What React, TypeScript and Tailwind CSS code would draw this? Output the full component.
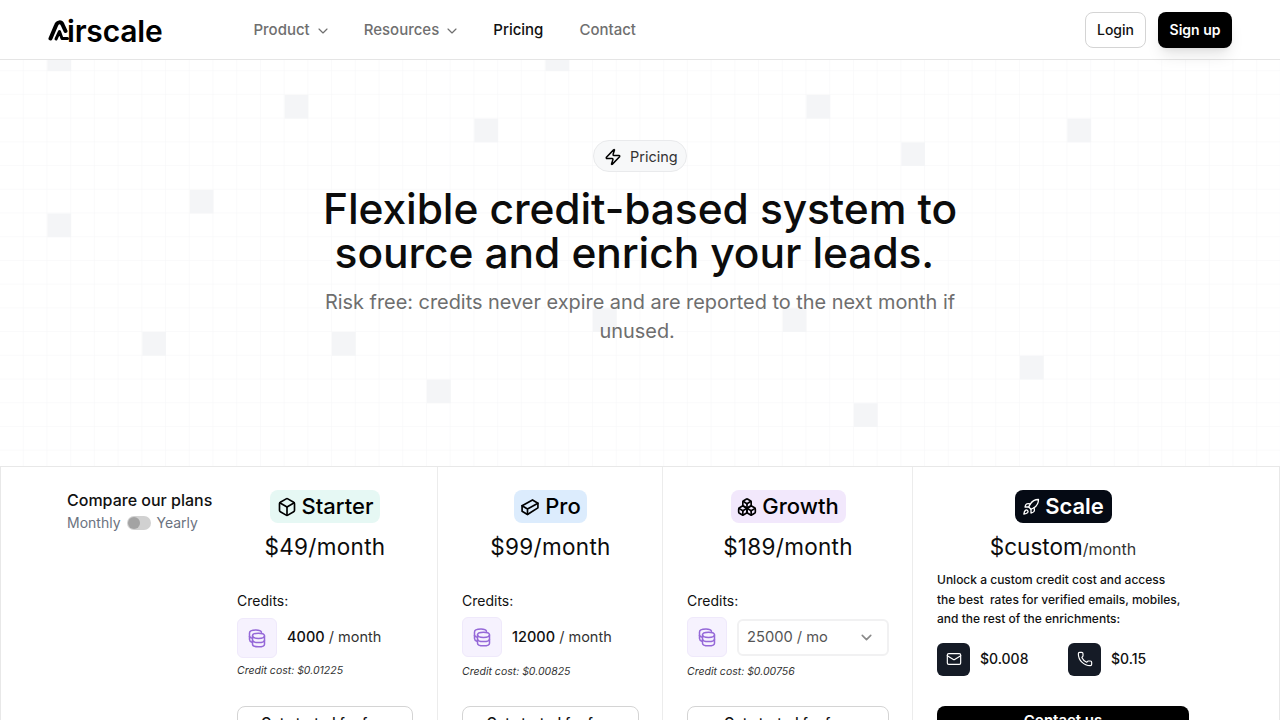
import { Box, Boxes, ChevronDown, Mail, Phone, Rocket, Zap } from "lucide-react";

const sans = "font-['Inter',sans-serif]";

const cell = 23.72;
const squares = [
  [2, 2], [23, 2], [12, 4], [34, 4], [20, 5], [45, 5], [38, 6], [8, 8],
  [2, 9], [25, 13], [33, 13], [6, 14], [14, 14], [43, 15], [18, 16], [36, 17],
];

const GridBackdrop = () => (
  <svg className="absolute left-0 top-0 h-[466px] w-full" aria-hidden="true">
    <defs>
      <pattern id="grid" width={cell} height={cell} patternUnits="userSpaceOnUse">
        <path d={`M${cell} 0V${cell}M0 ${cell}H${cell}`} fill="none" stroke="#f5f6f7" strokeWidth="1" />
      </pattern>
    </defs>
    <rect width="100%" height="100%" fill="url(#grid)" />
    {squares.map(([c, r]) => (
      <rect key={`${c}-${r}`} x={c * cell} y={r * cell} width={cell} height={cell} fill="#f4f5f7" />
    ))}
  </svg>
);

const Logo = () => (
  <div className="mt-[2px] flex items-center">
    <svg width="22" height="22" viewBox="0 0 22 22" className="-mr-[3px]" aria-hidden="true">
      <path
        d="M2.5 18.5 L8 5.5 C9.5 1.5 13 1.5 14.5 4.5 L17.5 11"
        fill="none"
        stroke="#000"
        strokeWidth="4"
        strokeLinecap="round"
      />
      <path
        d="M8 19 L11.5 11.5 L14 18.5 L19.5 18.5"
        fill="none"
        stroke="#000"
        strokeWidth="3"
        strokeLinecap="round"
        strokeLinejoin="round"
      />
    </svg>
    <span className="text-[30px] leading-none font-semibold tracking-[-0.2px] text-black">irscale</span>
  </div>
);

const Header = () => (
  <header className="relative z-10 flex h-[60px] items-center border-b border-[#e5e5e5] bg-white pl-12 pr-12">
    <Logo />
    <nav className="ml-[91px] mt-[2px] flex items-center text-[15px] font-medium text-[#6f6f6f]">
      <span className="flex items-center gap-[5px]">
        Product <ChevronDown size={16} strokeWidth={1.75} />
      </span>
      <span className="ml-[33px] flex items-center gap-[5px]">
        Resources <ChevronDown size={16} strokeWidth={1.75} />
      </span>
      <span className="ml-[33px] text-[#111]">Pricing</span>
      <span className="ml-9">Contact</span>
    </nav>
    <div className="ml-auto flex items-center gap-3 text-[14px] font-medium">
      <button className="h-9 w-[61px] rounded-lg border border-[#d4d4d4] bg-white text-[#111]">Login</button>
      <button className="h-9 w-[74px] rounded-lg bg-black font-semibold text-white shadow-lg">Sign up</button>
    </div>
  </header>
);

const Hero = () => (
  <section className="relative flex h-[406px] flex-col items-center pt-20">
    <div className="flex h-8 w-[94px] items-center gap-2 rounded-full border border-[#e9eaec] bg-[#f7f8f9] pl-[10px] pt-[1px] text-[14.5px] text-[#333]">
      <Zap size={18} strokeWidth={2} className="text-black" />
      Pricing
    </div>
    <h1 className="mt-[15px] w-[700px] text-center text-[42.5px] leading-[44px] font-medium tracking-[-0.1px] text-[#0c0c0c]">
      Flexible credit-based system to
      <br />
      source and enrich your leads.&nbsp;
    </h1>
    <p className="mt-[13px] w-[660px] text-center text-[19.9px] leading-[29px] text-[#6e6e6e]">
      Risk free: credits never expire and are reported to the next month if unused.&nbsp;
    </p>
  </section>
);

const CoinStack = () => (
  <svg width="20" height="20" viewBox="0 0 20 20" fill="none" stroke="#9568d8" strokeWidth="1.5" aria-hidden="true">
    <path d="M14.5 4.2C14 2.8 11.8 2 9 2 5.6 2 2.5 3 2.5 5v6.5c0 1.3 1 2.2 2.5 2.7" strokeLinecap="round" />
    <path d="M2.5 8.5C3.2 9.6 4.2 10 5.5 10.4" strokeLinecap="round" />
    <ellipse cx="11.5" cy="7.8" rx="6" ry="2.6" />
    <path d="M5.5 7.8v8.4c0 1.5 2.7 2.6 6 2.6s6-1.1 6-2.6V7.8" />
    <path d="M5.5 12c0 1.5 2.7 2.6 6 2.6s6-1.1 6-2.6" />
  </svg>
);

const CreditIcon = () => (
  <div className="flex h-10 w-10 shrink-0 items-center justify-center rounded-md border border-[#efe9fb] bg-[#f6f2fe]">
    <CoinStack />
  </div>
);

const IsoBox = () => (
  <svg width="20" height="20" viewBox="0 0 24 24" fill="none" stroke="#000" strokeWidth="2" strokeLinejoin="round" strokeLinecap="round" aria-hidden="true">
    <path d="M2.5 10.5 15 3.5l6.5 4v5.5L9 21l-6.5-4z" />
    <path d="M2.5 10.5 9 14.5l12.5-7M9 14.5V21" />
  </svg>
);

type Plan = {
  name: string;
  icon: React.ReactNode;
  pill: string;
  price: string;
  credits: React.ReactNode;
  cost: string;
  padding: string;
  boxOffset: string;
  costOffset: string;
};

const plans: Plan[] = [
  {
    name: "Starter",
    icon: <Box size={20} strokeWidth={2} />,
    pill: "bg-[#e6f8f4] w-[110px]",
    price: "$49/month",
    credits: (
      <span className="ml-[10px] -mt-[2px] text-[14.5px]">
        <span className="font-medium text-[#111]">4000</span> <span className="text-[#333]">/ month</span>
      </span>
    ),
    cost: "Credit cost: $0.01225",
    padding: "pl-[25px] pr-6",
    boxOffset: "mt-[7px]",
    costOffset: "mt-[5px] mb-[27px]",
  },
  {
    name: "Pro",
    icon: <IsoBox />,
    pill: "bg-[#dcecfd] w-[73px]",
    price: "$99/month",
    credits: (
      <span className="ml-[10px] -mt-[1px] text-[14.5px]">
        <span className="font-medium text-[#111]">12000</span> <span className="text-[#333]">/ month</span>
      </span>
    ),
    cost: "Credit cost: $0.00825",
    padding: "pl-6 pr-[23px]",
    boxOffset: "mt-[6px]",
    costOffset: "mt-[7px] mb-[26px]",
  },
  {
    name: "Growth",
    icon: <Boxes size={20} strokeWidth={2} />,
    pill: "bg-[#f2e8fc] w-[115px]",
    price: "$189/month",
    credits: (
      <div className="ml-[10px] flex h-[37px] w-[152px] items-center justify-between rounded-md border-2 border-[#f1f1f2] pl-2 pr-3 text-[14.7px] text-[#555]">
        25000 / mo
        <ChevronDown size={17} strokeWidth={2.25} className="text-[#8a8a8a]" />
      </div>
    ),
    cost: "Credit cost: $0.00756",
    padding: "pl-6 pr-[23px]",
    boxOffset: "mt-[6px]",
    costOffset: "mt-[7px] mb-[26px]",
  },
];

const PlanBadge = ({ className, children }: { className: string; children: React.ReactNode }) => (
  <div className={`flex h-[33px] items-center justify-center gap-[5px] rounded-lg text-[22px] font-medium ${className}`}>
    {children}
  </div>
);

const PlanColumn = ({ plan }: { plan: Plan }) => (
  <div className={`flex flex-col border-r border-[#ececec] pt-[23px] ${plan.padding}`}>
    <PlanBadge className={`self-center text-black ${plan.pill}`}>
      {plan.icon}
      {plan.name}
    </PlanBadge>
    <div className="mt-[9px] text-center text-[22.5px] leading-[30px] tracking-[0.3px] text-[#0c0c0c]">{plan.price}</div>
    <div className="mt-[29px] text-[14px] leading-5 text-[#111]">Credits:</div>
    <div className={`flex items-center ${plan.boxOffset}`}>
      <CreditIcon />
      {plan.credits}
    </div>
    <div className={`text-[10.5px] leading-4 italic text-[#333] ${plan.costOffset}`}>{plan.cost}</div>
    <button className="h-8 w-full shrink-0 rounded-lg border border-[#d4d4d4] bg-white text-[14px] font-medium text-[#111]">
      Get started for free
    </button>
  </div>
);

const ScaleColumn = () => (
  <div className="flex flex-col pl-6 pr-[90px] pt-[23px]">
    <PlanBadge className="w-[97px] self-center bg-[#050a14] font-semibold text-white">
      <Rocket size={18} strokeWidth={1.75} />
      Scale
    </PlanBadge>
    <div className="mt-[9px] text-center leading-[30px] text-[#0c0c0c]">
      <span className="text-[22.5px]">$custom</span>
      <span className="text-[16px] text-[#333]">/month</span>
    </div>
    <p className="mt-[6px] text-[12px] leading-[19.5px] font-medium whitespace-nowrap text-[#111]">
      Unlock a custom credit cost and access
      <br />
      the best&nbsp; rates for verified emails, mobiles,
      <br />
      and the rest of the enrichments:
    </p>
    <div className="mt-[14px] flex items-center text-[14px] text-[#111]">
      <div className="flex h-[33px] w-[33px] items-center justify-center rounded-md bg-[#151b26] text-white">
        <Mail size={16} strokeWidth={1.75} />
      </div>
      <span className="ml-[10px] -mt-[2px] w-[88px] font-medium">$0.008</span>
      <div className="flex h-[33px] w-[33px] items-center justify-center rounded-md bg-[#151b26] text-white">
        <Phone size={16} strokeWidth={1.75} />
      </div>
      <span className="ml-[10px] -mt-[2px] font-medium">$0.15</span>
    </div>
    <button className="mt-[30px] h-8 w-full shrink-0 rounded-lg bg-black text-[15px] font-semibold text-white">
      Contact us
    </button>
  </div>
);

const Compare = () => (
  <div className="pl-[66px] pt-[23px]">
    <div className="text-[16px] leading-[20px] font-medium whitespace-nowrap text-[#111]">Compare our plans</div>
    <div className="mt-[3px] flex items-center gap-[6px] text-[14px] leading-5 text-[#6b7280]">
      Monthly
      <span className="flex h-[14px] w-6 items-center rounded-full bg-[#d1d1d1] pl-[1px]">
        <span className="h-3 w-3 rounded-full bg-[#a3a3a3]" />
      </span>
      Yearly
    </div>
  </div>
);

const App = () => (
  <div className={`relative h-screen overflow-hidden bg-white ${sans}`}>
    <GridBackdrop />
    <Header />
    <Hero />
    <div className="relative grid h-[400px] grid-cols-[211px_226px_225px_250px_1fr] border-x border-t border-[#e8e8e8] bg-white">
      <Compare />
      <PlanColumn plan={plans[0]} />
      <PlanColumn plan={plans[1]} />
      <PlanColumn plan={plans[2]} />
      <ScaleColumn />
    </div>
  </div>
);

export default App;
